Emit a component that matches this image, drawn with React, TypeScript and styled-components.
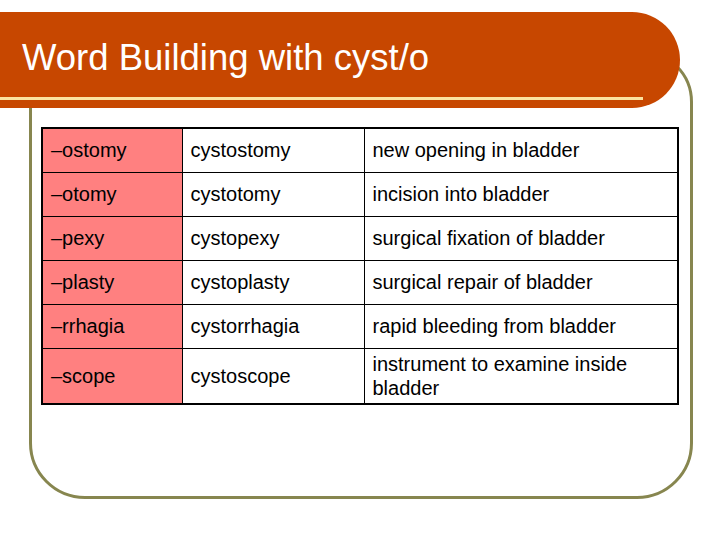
import React from "react";
import styled, { createGlobalStyle } from "styled-components";

type Row = {
  suffix: string;
  term: string;
  meaning: string;
};

const rows: Row[] = [
  { suffix: "–ostomy", term: "cystostomy", meaning: "new opening in bladder" },
  { suffix: "–otomy", term: "cystotomy", meaning: "incision into bladder" },
  { suffix: "–pexy", term: "cystopexy", meaning: "surgical fixation of bladder" },
  { suffix: "–plasty", term: "cystoplasty", meaning: "surgical repair of bladder" },
  { suffix: "–rrhagia", term: "cystorrhagia", meaning: "rapid bleeding from bladder" },
  { suffix: "–scope", term: "cystoscope", meaning: "instrument to examine inside bladder" },
];

export default function App(): JSX.Element {
  return (
    <>
      <GlobalStyle />
      <Slide>
        <Frame>
          <Table>
            <colgroup>
              <col style={{ width: 140 }} />
              <col style={{ width: 182 }} />
              <col />
            </colgroup>
            <tbody>
              {rows.map((row, i) => (
                <TableRow key={row.suffix} $tall={i === rows.length - 1}>
                  <Cell $accent>{row.suffix}</Cell>
                  <Cell>{row.term}</Cell>
                  <Cell>{row.meaning}</Cell>
                </TableRow>
              ))}
            </tbody>
          </Table>
        </Frame>
        <Banner>
          <Title>Word Building with cyst/o</Title>
          <Rule role="presentation" />
        </Banner>
      </Slide>
    </>
  );
}

const GlobalStyle = createGlobalStyle`
  html, body {
    margin: 0;
    padding: 0;
    background: #ffffff;
  }
`;

const Slide = styled.div`
  position: relative;
  width: 728px;
  height: 546px;
  box-sizing: border-box;
  padding: 50px 0 0 29px;
  background: #ffffff;
  font-family: "Liberation Sans", Arial, sans-serif;
  overflow: hidden;
`;

const Frame = styled.div`
  width: 664px;
  height: 449px;
  box-sizing: border-box;
  border: 3px solid #87864f;
  border-radius: 52px 52px 56px 56px;
  padding: 74px 0 0 9px;
`;

const Banner = styled.header`
  position: absolute;
  top: 12px;
  left: 0;
  width: 680px;
  height: 96px;
  box-sizing: border-box;
  background: #c74700;
  border-radius: 0 48px 48px 0;
  padding-top: 26px;
  display: flex;
  flex-direction: column;
`;

const Title = styled.h1`
  margin: 0 0 0 22px;
  font-family: "Liberation Sans", Arial, sans-serif;
  font-weight: 400;
  font-size: 36.5px;
  line-height: 40px;
  color: #ffffff;
  white-space: nowrap;
`;

const Rule = styled.div`
  margin-top: 19px;
  width: 643px;
  height: 3px;
  background: #fbe3a0;
`;

const Table = styled.table`
  width: 638px;
  border-collapse: collapse;
  table-layout: fixed;
  border: 2px solid #000000;
`;

const TableRow = styled.tr<{ $tall?: boolean }>`
  height: ${({ $tall }) => ($tall ? "56px" : "44px")};
`;

const Cell = styled.td<{ $accent?: boolean }>`
  border: 1px solid #000000;
  background: ${({ $accent }) => ($accent ? "#ff8080" : "#ffffff")};
  padding: 0 8px;
  font-size: 20px;
  line-height: 24px;
  color: #000000;
  vertical-align: middle;
`;
